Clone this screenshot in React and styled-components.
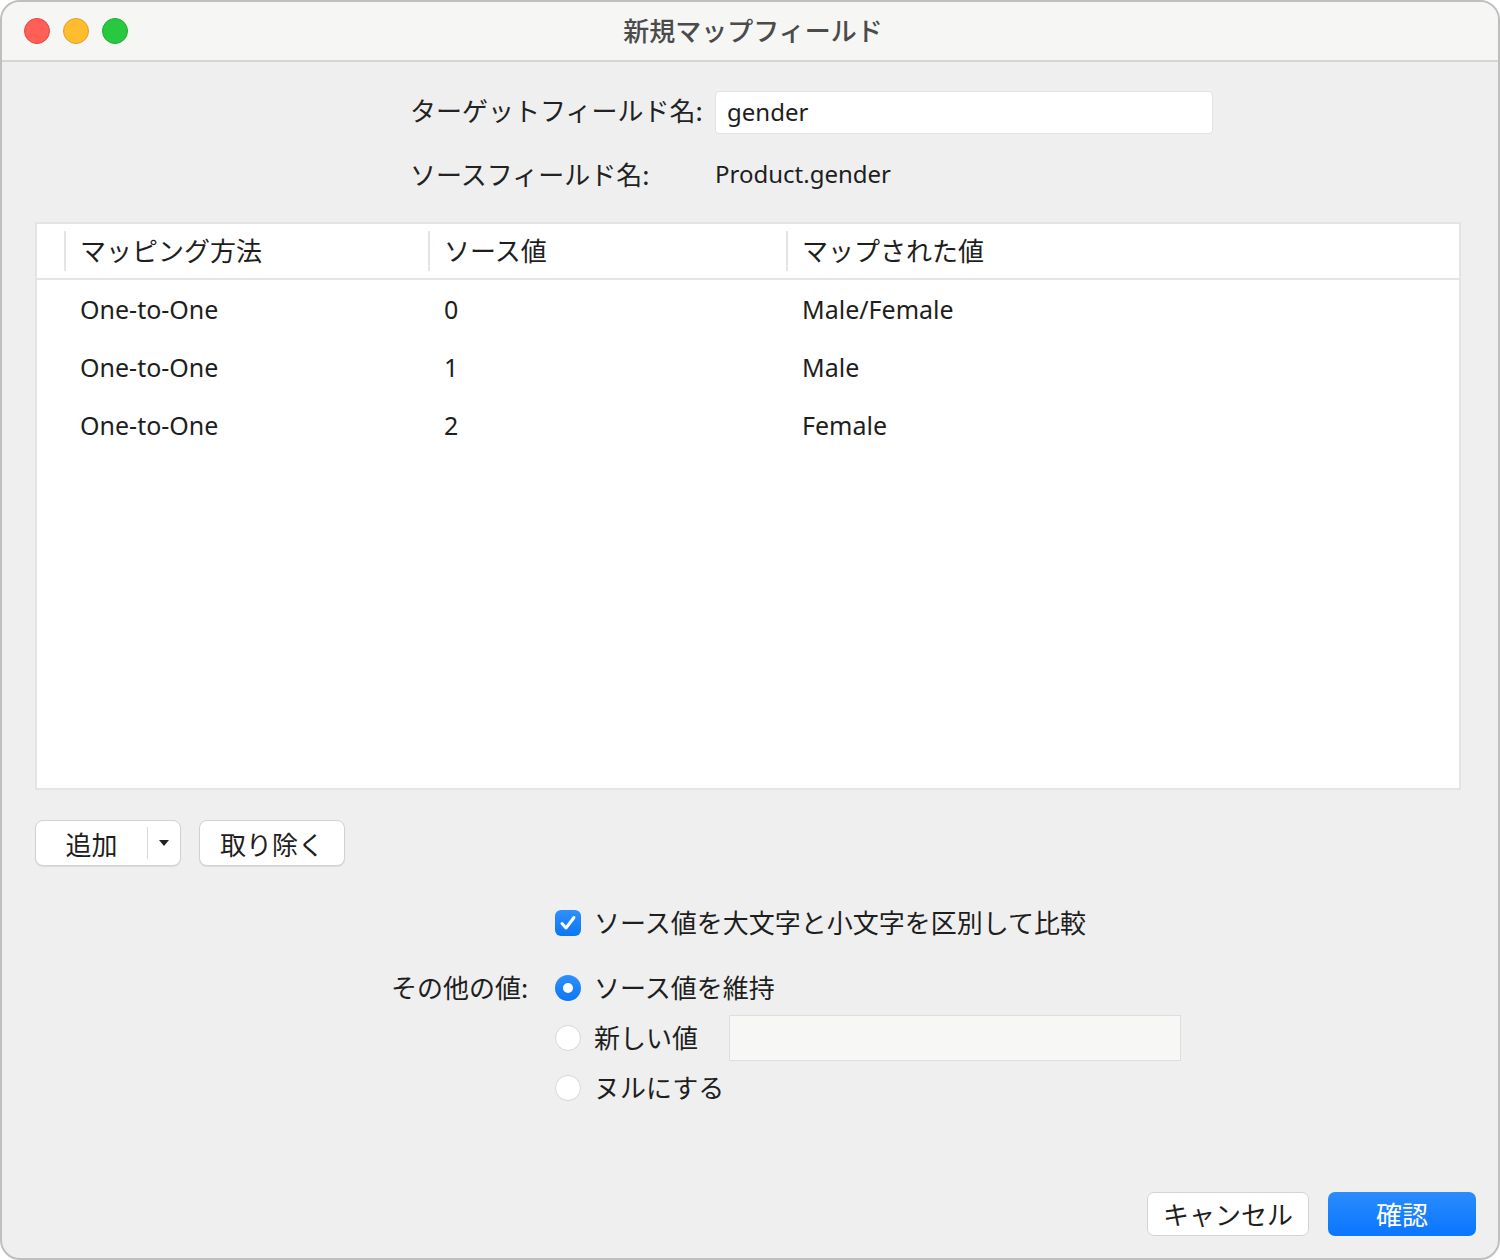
import styled, { createGlobalStyle } from "styled-components";

const GlobalStyle = createGlobalStyle`
  html, body {
    margin: 0;
    padding: 0;
    background: #ffffff;
  }
  * {
    box-sizing: border-box;
  }
  body {
    font-family: "Noto Sans", "Noto Sans CJK JP", sans-serif;
    font-size: 26px;
    color: #1e1e1e;
  }
`;

const Window = styled.div`
  width: 1500px;
  height: 1260px;
  border: 2px solid #bfbfbf;
  border-radius: 20px;
  overflow: hidden;
  background: #efefef;
  display: flex;
  flex-direction: column;
`;

const TitleBar = styled.div`
  height: 60px;
  flex-shrink: 0;
  background: #f6f6f4;
  border-bottom: 2px solid #d6d6d6;
  display: grid;
  grid-template-columns: 200px 1fr 200px;
  align-items: center;
`;

const Lights = styled.div`
  display: flex;
  gap: 13px;
  padding-left: 22px;
`;

const Light = styled.span`
  width: 26px;
  height: 26px;
  border-radius: 50%;
  background: ${(p) => p.$fill};
  border: 1px solid ${(p) => p.$edge};
`;

const Title = styled.div`
  text-align: center;
  font-family: "Noto Sans CJK JP", sans-serif;
  font-weight: 500;
  color: #4b4b4b;
  line-height: 1;
  margin: -2px 0 0 6px;
`;

const FieldGrid = styled.div`
  display: grid;
  grid-template-columns: 305px 498px;
  row-gap: 20px;
  align-items: center;
  margin: 28px 0 0 408px;
`;

const Label = styled.div`
  font-family: "Noto Sans CJK JP", sans-serif;
  line-height: 40px;
  padding-bottom: 4px;
  color: #222;
`;

const TextInput = styled.div`
  height: 43px;
  background: #ffffff;
  border: 1px solid #e2e2e2;
  border-radius: 4px;
  padding-left: 11px;
  font-size: 24px;
  line-height: 39px;
`;

const Value = styled.div`
  font-size: 24px;
  line-height: 40px;
  padding-bottom: 4px;
`;

const Table = styled.div`
  margin: 24px 0 0 33px;
  width: 1426px;
  height: 568px;
  background: #ffffff;
  border: 2px solid #e4e4e4;
`;

const HeaderRow = styled.div`
  display: grid;
  grid-template-columns: 27px 364px 358px 1fr;
  height: 56px;
  align-items: center;
  border-bottom: 2px solid #e4e4e4;
`;

const HeaderCell = styled.div`
  height: 40px;
  border-left: 2px solid #e4e4e4;
  padding-left: 14px;
  line-height: 38px;
  font-family: "Noto Sans CJK JP", sans-serif;
`;

const BodyRow = styled.div`
  display: grid;
  grid-template-columns: 27px 364px 358px 1fr;
  height: 58px;
  align-items: center;
`;

const BodyCell = styled.div`
  padding-left: 16px;
  font-size: 25px;
  line-height: 54px;
`;

const ButtonRow = styled.div`
  display: flex;
  gap: 18px;
  margin: 30px 0 0 33px;
`;

const PlainButton = styled.button`
  height: 46px;
  width: ${(p) => p.$width}px;
  background: #ffffff;
  border: 1px solid #d2d2d2;
  border-radius: 8px;
  box-shadow: 0 1px 1px rgba(0, 0, 0, 0.08);
  font: inherit;
  font-family: "Noto Sans CJK JP", sans-serif;
  color: #1e1e1e;
  padding: 0;
  display: flex;
  align-items: center;
  justify-content: center;
`;

const SplitMain = styled.span`
  flex: 0 0 111px;
  text-align: center;
`;

const SplitDivider = styled.span`
  width: 1px;
  height: 32px;
  background: #d8d8d8;
`;

const SplitArrow = styled.span`
  flex: 1;
  display: flex;
  justify-content: center;
`;

const OptionsGrid = styled.div`
  display: grid;
  grid-template-columns: 164px auto;
  row-gap: 14px;
  align-items: center;
  margin: 44px 0 0 389px;
`;

const OptionLabel = styled.div`
  font-family: "Noto Sans CJK JP", sans-serif;
  line-height: 26px;
  margin-top: -3px;
`;

const Choice = styled.div`
  display: flex;
  align-items: center;
  gap: 13px;
  font-family: "Noto Sans CJK JP", sans-serif;
  line-height: 26px;
  margin-bottom: ${(p) => p.$after || 0}px;
`;

const ChoiceText = styled.span`
  margin-top: -3px;
`;

const CheckBox = styled.span`
  width: 26px;
  height: 26px;
  border-radius: 6px;
  background: linear-gradient(#2f90fb, #0a77f4);
  display: flex;
  align-items: center;
  justify-content: center;
`;

const Radio = styled.span`
  width: 26px;
  height: 26px;
  border-radius: 50%;
  flex-shrink: 0;
  background: ${(p) => (p.$on ? "linear-gradient(#2f90fb, #0a77f4)" : "#ffffff")};
  border: ${(p) => (p.$on ? "none" : "1.5px solid #d7d7d7")};
  display: flex;
  align-items: center;
  justify-content: center;

  &::after {
    content: "";
    display: ${(p) => (p.$on ? "block" : "none")};
    width: 10px;
    height: 10px;
    border-radius: 50%;
    background: #ffffff;
  }
`;

const NewValueInput = styled.div`
  width: 452px;
  height: 46px;
  margin-left: 18px;
  background: #f7f7f5;
  border: 1px solid #dedede;
`;

const Footer = styled.div`
  margin-top: auto;
  display: flex;
  justify-content: flex-end;
  align-items: center;
  gap: 19px;
  padding: 0 22px 22px 0;
`;

const DialogButton = styled.button`
  height: 44px;
  width: ${(p) => p.$width}px;
  border-radius: 7px;
  font: inherit;
  font-family: "Noto Sans CJK JP", sans-serif;
  padding: 0 0 2px;
  color: ${(p) => (p.$primary ? "#ffffff" : "#1e1e1e")};
  background: ${(p) => (p.$primary ? "linear-gradient(#2a8cfd, #0a75fe)" : "#ffffff")};
  border: ${(p) => (p.$primary ? "none" : "1.5px solid #d4d4d4")};
`;

const rows = [
  { method: "One-to-One", source: "0", mapped: "Male/Female" },
  { method: "One-to-One", source: "1", mapped: "Male" },
  { method: "One-to-One", source: "2", mapped: "Female" },
];

function App() {
  return (
    <>
      <GlobalStyle />
      <Window>
        <TitleBar>
          <Lights>
            <Light $fill="#ff5f57" $edge="#e2463f" />
            <Light $fill="#febc2e" $edge="#dfa123" />
            <Light $fill="#28c840" $edge="#1dac2c" />
          </Lights>
          <Title>新規マップフィールド</Title>
          <div />
        </TitleBar>

        <FieldGrid>
          <Label>ターゲットフィールド名:</Label>
          <TextInput>gender</TextInput>
          <Label>ソースフィールド名:</Label>
          <Value>Product.gender</Value>
        </FieldGrid>

        <Table>
          <HeaderRow>
            <div />
            <HeaderCell>マッピング方法</HeaderCell>
            <HeaderCell>ソース値</HeaderCell>
            <HeaderCell>マップされた値</HeaderCell>
          </HeaderRow>
          {rows.map((row) => (
            <BodyRow key={row.source}>
              <div />
              <BodyCell>{row.method}</BodyCell>
              <BodyCell>{row.source}</BodyCell>
              <BodyCell>{row.mapped}</BodyCell>
            </BodyRow>
          ))}
        </Table>

        <ButtonRow>
          <PlainButton $width={146}>
            <SplitMain>追加</SplitMain>
            <SplitDivider />
            <SplitArrow>
              <svg width="10" height="6" viewBox="0 0 10 6">
                <path d="M0 0 L10 0 L5 6 Z" fill="#222" />
              </svg>
            </SplitArrow>
          </PlainButton>
          <PlainButton $width={146}>取り除く</PlainButton>
        </ButtonRow>

        <OptionsGrid>
          <div />
          <Choice $after={25}>
            <CheckBox>
              <svg width="20" height="20" viewBox="0 0 20 20">
                <path
                  d="M4 10.5 L8 15 L16 4.5"
                  fill="none"
                  stroke="#ffffff"
                  strokeWidth="3"
                  strokeLinecap="round"
                  strokeLinejoin="round"
                />
              </svg>
            </CheckBox>
            <ChoiceText>ソース値を大文字と小文字を区別して比較</ChoiceText>
          </Choice>

          <OptionLabel>その他の値:</OptionLabel>
          <Choice>
            <Radio $on />
            <ChoiceText>ソース値を維持</ChoiceText>
          </Choice>

          <div />
          <Choice>
            <Radio />
            <ChoiceText>新しい値</ChoiceText>
            <NewValueInput />
          </Choice>

          <div />
          <Choice>
            <Radio />
            <ChoiceText>ヌルにする</ChoiceText>
          </Choice>
        </OptionsGrid>

        <Footer>
          <DialogButton $width={162}>キャンセル</DialogButton>
          <DialogButton $width={148} $primary>
            確認
          </DialogButton>
        </Footer>
      </Window>
    </>
  );
}

export default App;
